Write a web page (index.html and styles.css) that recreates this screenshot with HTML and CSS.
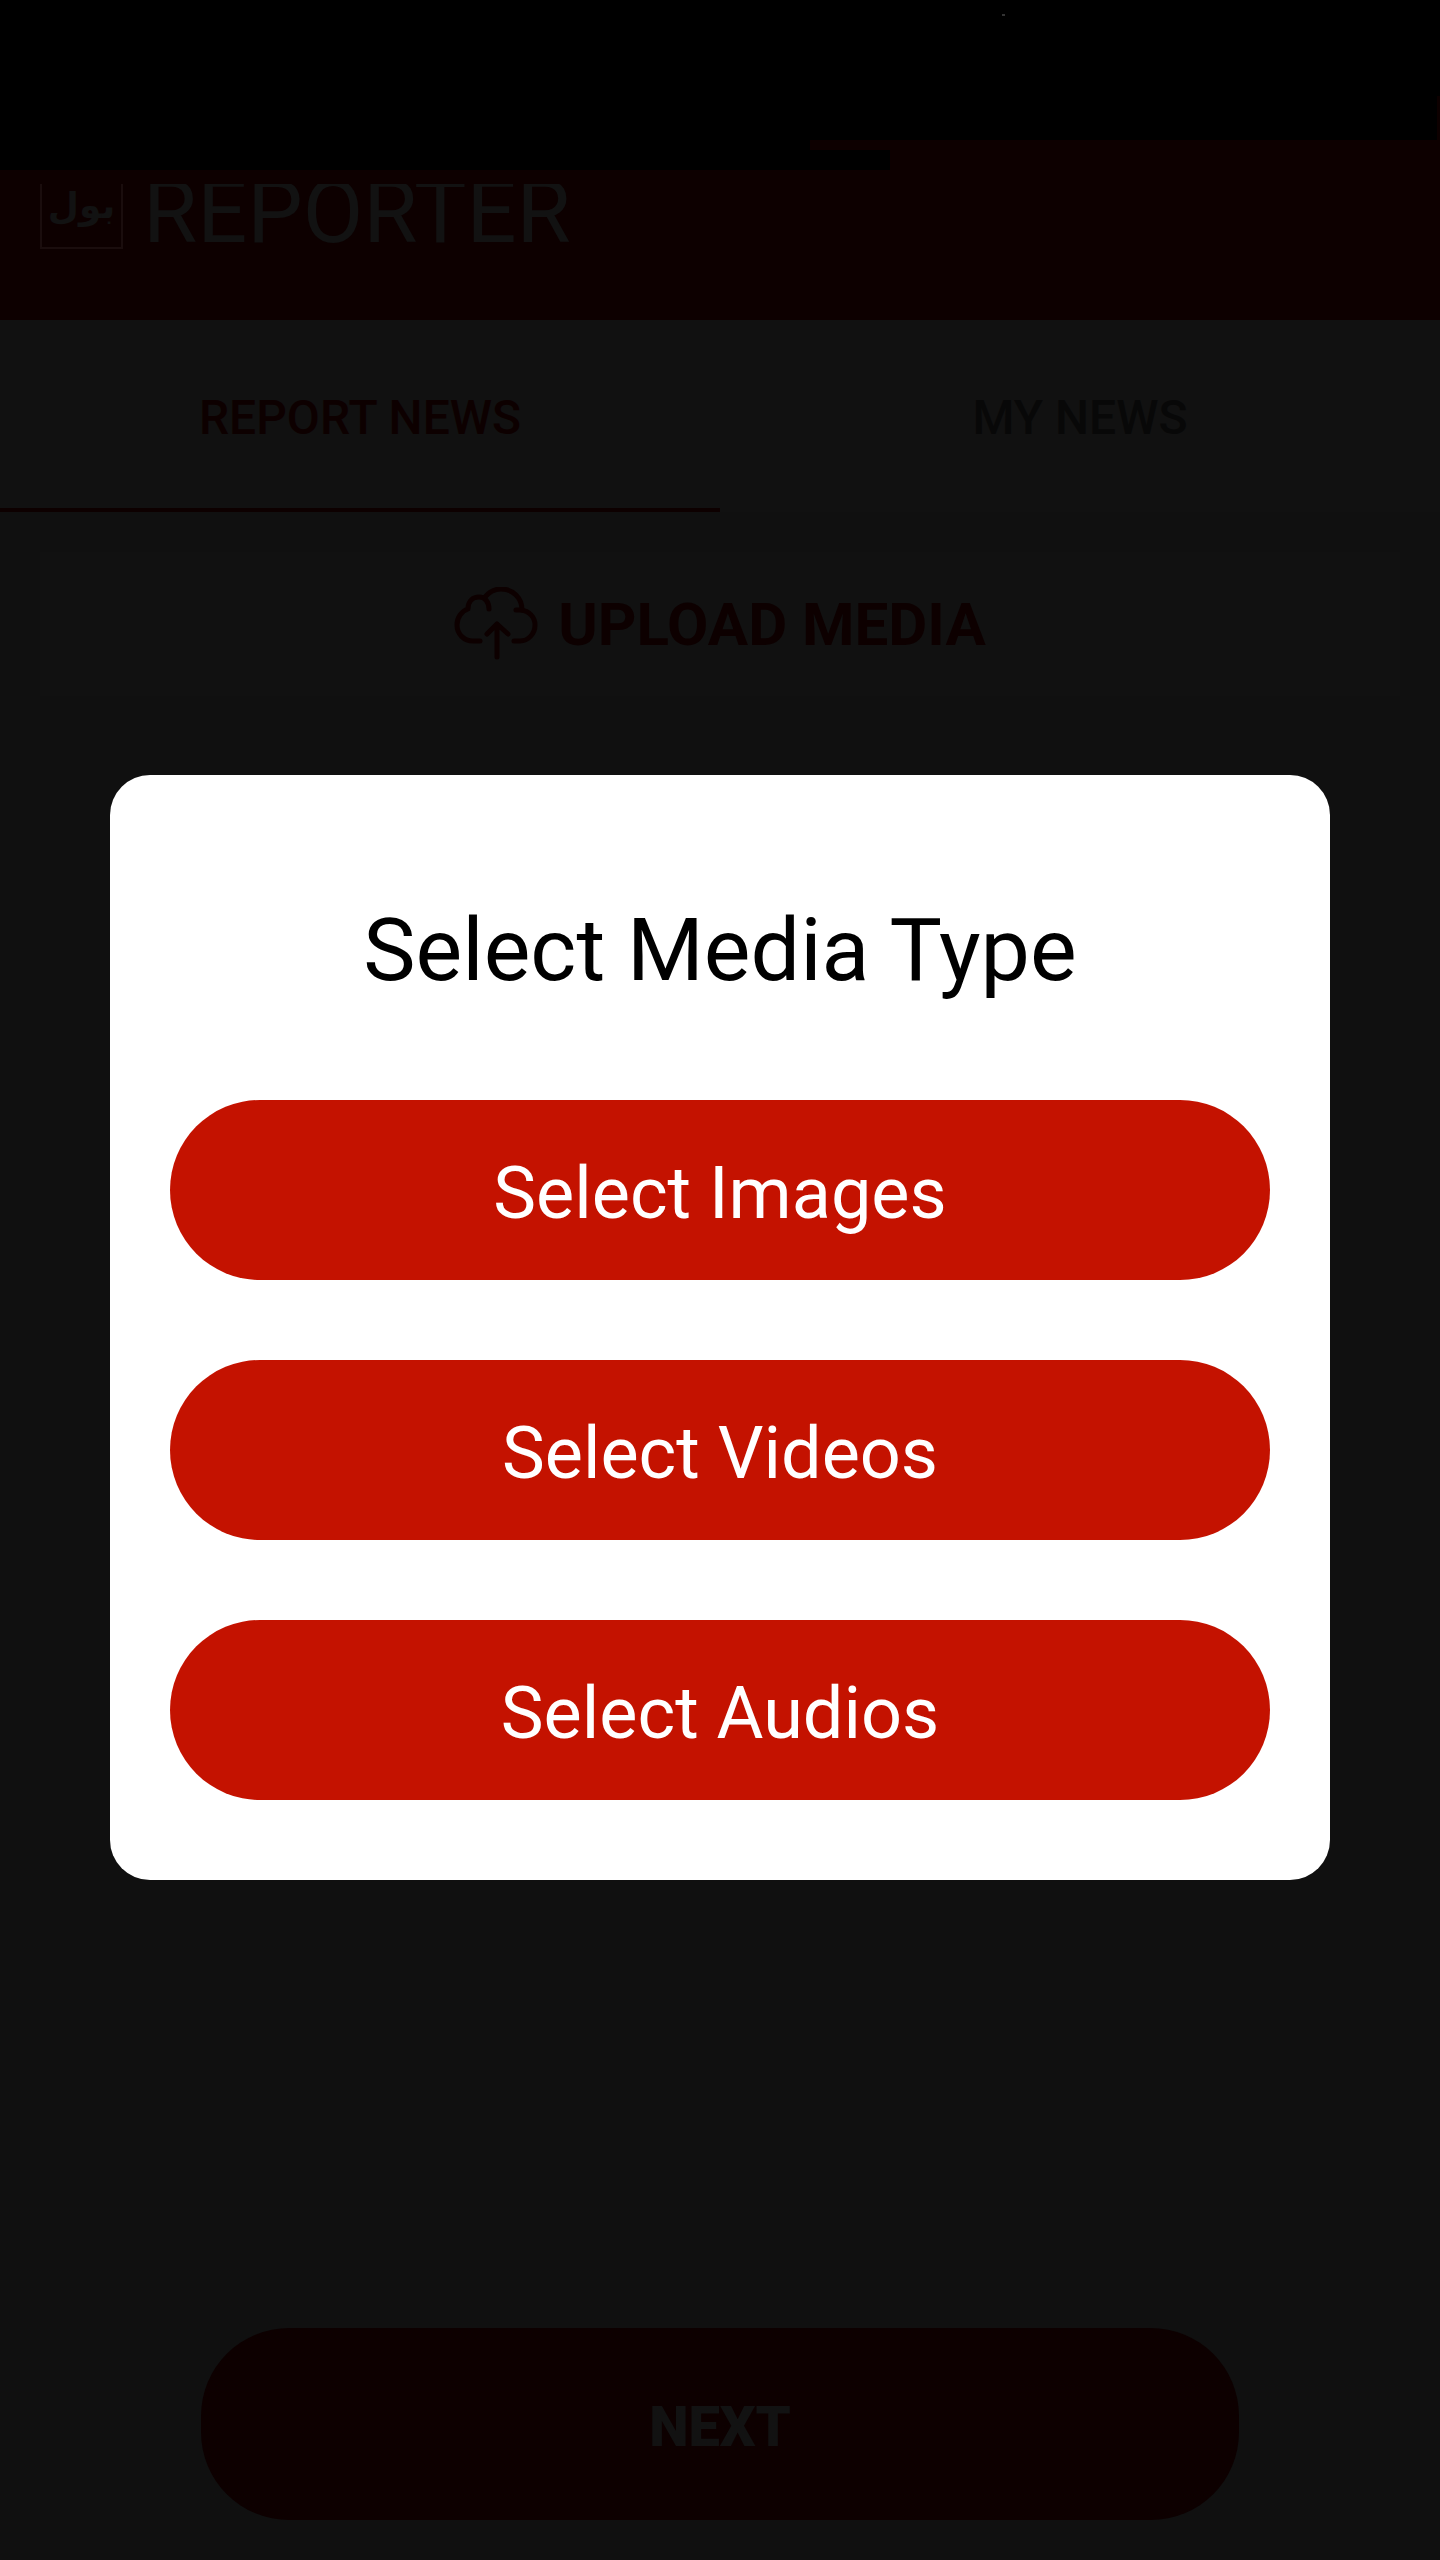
FILE: index.html
```html
<!DOCTYPE html>
<html lang="en">
<head>
    <meta charset="UTF-8">
    <meta name="viewport" content="width=device-width, initial-scale=1.0">
    <title>BOL Reporter</title>
    <link rel="stylesheet" href="styles.css">
</head>
<body>
    <div class="app">
        <!-- Header -->
        <header class="app-header">
            <div class="status-bar">
                <div class="status-notch"></div>
                <div class="status-dot"></div>
                <div class="status-edge"></div>
            </div>
            <div class="brand">
                <span class="brand-logo" lang="ur">بول</span>
                <h1 class="brand-name">REPORTER</h1>
            </div>
        </header>

        <!-- Tabs -->
        <nav class="tabs">
            <a href="#report" class="tab active">REPORT NEWS</a>
            <a href="#my-news" class="tab">MY NEWS</a>
        </nav>

        <!-- Report form -->
        <main class="content">
            <button type="button" class="upload-btn">
                <svg class="upload-icon" viewBox="0 0 84 74" fill="none" stroke="currentColor" stroke-width="5" stroke-linecap="round" stroke-linejoin="round">
                    <path d="M26 54H19C10 54 3 47 3 38C3 30 8 24 14 22C14 14 19 10 25 10C31 10 35 15 35 22"/>
                    <path d="M31 10C35 5 41 2 47 2C59 2 68 11 68 23"/>
                    <path d="M62 23H67C75 24 81 30 81 38C81 47 74 54 66 54H60"/>
                    <path d="M43 70V37M33 47L43 37L54 47"/>
                </svg>
                <span>UPLOAD MEDIA</span>
            </button>
            <button type="button" class="next-btn">NEXT</button>
        </main>
    </div>

    <!-- Media type dialog -->
    <div class="overlay">
        <div class="dialog" role="dialog" aria-modal="true" aria-labelledby="dialogTitle">
            <h2 id="dialogTitle">Select Media Type</h2>
            <button type="button" class="media-btn">Select Images</button>
            <button type="button" class="media-btn">Select Videos</button>
            <button type="button" class="media-btn">Select Audios</button>
        </div>
    </div>
</body>
</html>
```

FILE: styles.css
```css
:root {
    --primary-color: #c41200;
    --dim-red: #0d0000;
    --dim-surface: #111111;
    --dim-background: #101010;
}

* {
    margin: 0;
    padding: 0;
    box-sizing: border-box;
    font-family: Roboto, sans-serif;
}

body {
    background-color: var(--dim-background);
}

button {
    border: none;
    cursor: pointer;
}

.app {
    min-height: 100vh;
    display: flex;
    flex-direction: column;
}

/* Header */
.app-header {
    background: var(--dim-red);
    height: 320px;
}

.status-bar {
    position: relative;
    height: 140px;
    background: #000;
}

.status-notch {
    position: absolute;
    top: 140px;
    left: 0;
    width: 890px;
    height: 30px;
    background: linear-gradient(var(--dim-red), var(--dim-red)) top right / 80px 10px no-repeat #000;
}

.status-dot {
    position: absolute;
    top: 14px;
    left: 1002px;
    width: 3px;
    height: 2px;
    background: #333;
}

.status-edge {
    position: absolute;
    top: 96px;
    right: 0;
    width: 3px;
    height: 44px;
    background: var(--dim-red);
}

.brand {
    display: flex;
    align-items: flex-end;
    gap: 20px;
    height: 80px;
    margin-top: 44px;
    padding: 0 40px;
    overflow: hidden;
    color: #121212;
}

.brand-logo {
    width: 83px;
    height: 83px;
    margin-bottom: 15px;
    border: 2px solid #1a0d0d;
    font-family: "DejaVu Sans", sans-serif;
    font-size: 36px;
    font-weight: bold;
    line-height: 76px;
    text-align: center;
}

.brand-name {
    font-size: 88px;
    font-weight: 400;
    line-height: 88px;
    margin-bottom: 8px;
}

/* Tabs */
.tabs {
    display: flex;
    height: 192px;
    background: var(--dim-surface);
}

.tab {
    flex: 1;
    display: flex;
    align-items: center;
    justify-content: center;
    padding-top: 6px;
    border-bottom: 4px solid transparent;
    color: #080808;
    font-size: 48px;
    font-weight: 500;
    text-decoration: none;
}

.tab.active {
    color: var(--dim-red);
    border-bottom-color: var(--dim-red);
}

/* Content */
.content {
    flex: 1;
    display: flex;
    flex-direction: column;
    align-items: center;
    justify-content: space-between;
    padding: 40px;
}

.upload-btn {
    display: flex;
    align-items: center;
    justify-content: center;
    gap: 20px;
    width: 100%;
    height: 144px;
    background: var(--dim-surface);
    color: var(--dim-red);
    font-size: 60px;
    font-weight: 700;
}

.upload-icon {
    width: 84px;
    height: 74px;
}

.next-btn {
    width: calc(100% - 322px);
    height: 192px;
    padding-top: 6px;
    border-radius: 88px;
    background: var(--dim-red);
    color: #121212;
    font-size: 56px;
    font-weight: 900;
}

/* Dialog */
.overlay {
    position: fixed;
    inset: 0;
    display: flex;
    align-items: center;
    justify-content: center;
    padding: 95px 110px 0;
}

.dialog {
    display: flex;
    flex-direction: column;
    gap: 80px;
    width: 100%;
    padding: 122px 60px 80px;
    border-radius: 40px;
    background: #fff;
}

.dialog h2 {
    color: #000;
    font-size: 88px;
    font-weight: 400;
    line-height: 106px;
    text-align: center;
    margin-bottom: 17px;
}

.media-btn {
    height: 180px;
    padding-top: 6px;
    border-radius: 90px;
    background: var(--primary-color);
    color: #fff;
    font-size: 72px;
    font-weight: 400;
}
```
